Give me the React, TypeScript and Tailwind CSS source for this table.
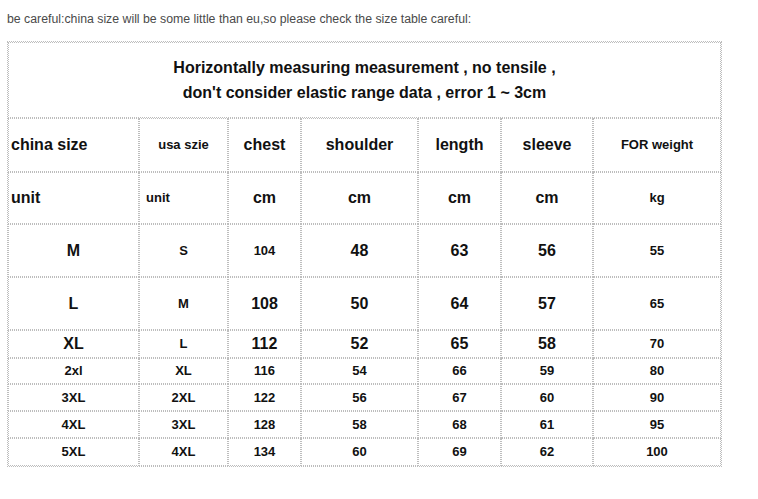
const cols = "grid-cols-[131px_89px_73px_117px_83px_92px_128px]";

type Cell = { t: string; big?: boolean; left?: boolean; pl?: string };

const big = (t: string): Cell => ({ t, big: true });
const sm = (t: string): Cell => ({ t });

const rows: { h: string; cells: Cell[] }[] = [
  {
    h: "h-[54px]",
    cells: [
      { t: "china size", big: true, left: true, pl: "pl-[2px]" },
      sm("usa szie"),
      big("chest"),
      big("shoulder"),
      big("length"),
      big("sleeve"),
      sm("FOR weight"),
    ],
  },
  {
    h: "h-[52px]",
    cells: [
      { t: "unit", big: true, left: true, pl: "pl-[2px]" },
      { t: "unit", left: true, pl: "pl-[6px]" },
      big("cm"),
      big("cm"),
      big("cm"),
      big("cm"),
      sm("kg"),
    ],
  },
  { h: "h-[53px]", cells: [big("M"), sm("S"), sm("104"), big("48"), big("63"), big("56"), sm("55")] },
  { h: "h-[53px]", cells: [big("L"), sm("M"), big("108"), big("50"), big("64"), big("57"), sm("65")] },
  { h: "h-[28px]", cells: [big("XL"), sm("L"), big("112"), big("52"), big("65"), big("58"), sm("70")] },
  { h: "h-[26px]", cells: [sm("2xl"), sm("XL"), sm("116"), sm("54"), sm("66"), sm("59"), sm("80")] },
  { h: "h-[27px]", cells: [sm("3XL"), sm("2XL"), sm("122"), sm("56"), sm("67"), sm("60"), sm("90")] },
  { h: "h-[27px]", cells: [sm("4XL"), sm("3XL"), sm("128"), sm("58"), sm("68"), sm("61"), sm("95")] },
  { h: "h-[28px]", cells: [sm("5XL"), sm("4XL"), sm("134"), sm("60"), sm("69"), sm("62"), sm("100")] },
];

export default function App() {
  return (
    <div className="min-h-screen bg-white pl-[7px] pt-[12px] font-['Liberation_Sans',Arial,sans-serif]">
      <p className="text-[12.3px] leading-[14px] text-[#4a4a4a]">
        be careful:china size will be some little than eu,so please check the size table careful:
      </p>

      {/* size table: doubled dotted lines like an old border=1 cellspacing=0 table */}
      <div className={`mt-[15px] grid w-[715px] ${cols} border border-dotted border-[#bdbdbd] text-[#111]`}>
        <div className="col-span-7 flex h-[76px] flex-col items-center justify-center border border-dotted border-[#bdbdbd] text-[16px] font-bold leading-[25px]">
          <span>Horizontally measuring measurement , no tensile ,</span>
          <span>don't consider elastic range data , error 1 ~ 3cm</span>
        </div>

        {rows.map((row, r) =>
          row.cells.map((c, i) => (
            <div
              key={`${r}-${i}`}
              className={`flex ${row.h} items-center border border-dotted border-[#bdbdbd] font-bold ${
                c.left ? `justify-start ${c.pl}` : "justify-center"
              } ${c.big ? "text-[16px]" : "text-[13px]"}`}
            >
              {c.t}
            </div>
          ))
        )}
      </div>
    </div>
  );
}
